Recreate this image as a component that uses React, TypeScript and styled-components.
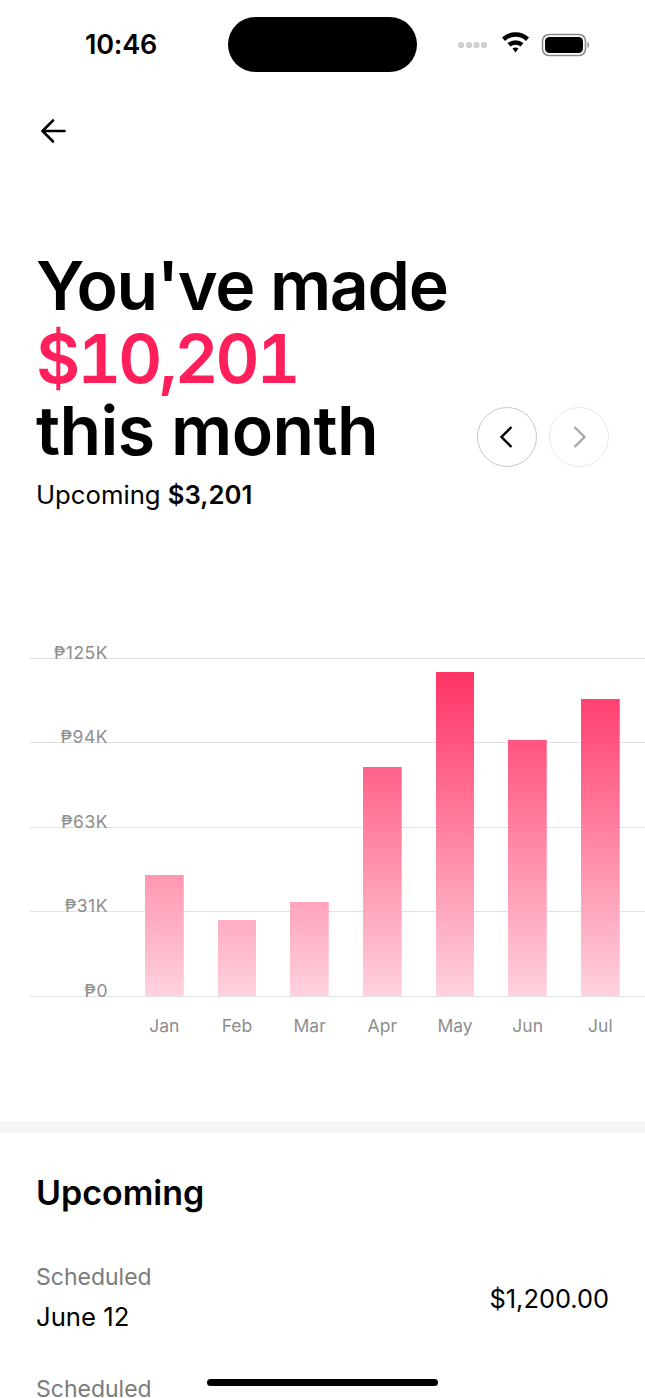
import React from "react";
import styled, { createGlobalStyle } from "styled-components";

const Global = createGlobalStyle`
  html, body { margin: 0; padding: 0; background: #fff; }
  body { font-family: Inter, "Liberation Sans", sans-serif; color: #000; }
  * { box-sizing: border-box; }
`;

const Page = styled.div`
  position: relative;
  width: 645px;
  height: 1398px;
  overflow: hidden;
  background: #fff;
`;

const StatusBar = styled.div`
  position: relative;
  height: 89px;
  padding: 0 56px 0 85px;
  display: flex;
  align-items: center;
  justify-content: space-between;
`;

const Time = styled.div`
  font-size: 27px;
  font-weight: 600;
  letter-spacing: -0.2px;
  line-height: 30px;
  color: #000;
`;

const Island = styled.div`
  position: absolute;
  left: 228px;
  top: 17px;
  width: 189px;
  height: 55px;
  border-radius: 28px;
  background: #000;
`;

const StatusIcons = styled.div`
  display: flex;
  align-items: center;
`;

const BackRow = styled.div`
  height: 82px;
  padding: 29px 0 0 40px;
  display: flex;
  align-items: flex-start;
`;

const Hero = styled.section`
  position: relative;
  padding: 78px 36px 0 36px;
`;

const Headline = styled.h1`
  margin: 0;
  font-size: 68px;
  line-height: 72.5px;
  font-weight: 600;
  letter-spacing: -1.3px;
`;

const Amount = styled.span`
  display: block;
  color: #ff1f5a;
  font-feature-settings: "tnum";
  letter-spacing: -3px;
`;

const HeadTail = styled.span`
  display: block;
  letter-spacing: -0.6px;
`;

const Sub = styled.p`
  margin: 11px 0 0;
  font-size: 25.7px;
  line-height: 34px;
  font-weight: 400;
  b { font-weight: 600; }
`;

const Pager = styled.div`
  position: absolute;
  right: 36px;
  top: 236px;
  display: flex;
  gap: 12px;
`;

const Circle = styled.button<{ $off?: boolean }>`
  width: 60px;
  height: 60px;
  border-radius: 50%;
  padding: 0;
  background: #fff;
  border: 1px solid ${(p) => (p.$off ? "#e9e9eb" : "#c6c7c9")};
  color: ${(p) => (p.$off ? "#aaaaaa" : "#000")};
  display: flex;
  align-items: center;
  justify-content: center;
`;

const Chart = styled.section`
  position: relative;
  margin: 146px 0 0 30px;
  height: 463px;
`;

const GridRow = styled.div`
  height: 84.5px;
  border-top: 1px solid #e0e2ea;
  position: relative;
`;

const AxisLabel = styled.span`
  position: absolute;
  right: calc(100% - 78px);
  bottom: 100%;
  margin-bottom: -4px;
  white-space: nowrap;
  font-size: 17.5px;
  line-height: 20px;
  letter-spacing: 0.5px;
  color: #8e8e8e;
`;

const Bars = styled.div`
  position: absolute;
  left: 115px;
  top: 14px;
  height: 324px;
  display: flex;
  align-items: flex-end;
  gap: 34.2px;
`;

const Bar = styled.div`
  width: 38.5px;
  background-image: linear-gradient(to bottom, #ff3366, #ffd2df);
  background-size: 100% 324px;
  background-position: bottom;
  background-repeat: no-repeat;
`;

const Months = styled.div`
  position: absolute;
  left: 115px;
  top: 358px;
  display: flex;
  gap: 34.2px;
`;

const Month = styled.span`
  width: 38.5px;
  display: flex;
  justify-content: center;
  font-size: 17.5px;
  line-height: 20px;
  color: #8e8e8e;
`;

const Divider = styled.div`
  height: 12px;
  background: #f5f5f5;
`;

const Upcoming = styled.section`
  padding: 38px 36px 0 36px;
`;

const SectionTitle = styled.h2`
  margin: 0 0 43px;
  font-size: 34px;
  line-height: 44px;
  font-weight: 600;
`;

const Row = styled.div`
  display: flex;
  align-items: center;
  justify-content: space-between;
  margin-bottom: 34px;
`;

const Label = styled.div`
  font-size: 23px;
  line-height: 39px;
  color: #7c7c7c;
`;

const Value = styled.div`
  font-size: 25.7px;
  line-height: 39px;
  color: #000;
`;

const Price = styled(Value)`
  font-size: 25.4px;
  margin-top: 3px;
`;

const HomeIndicator = styled.div`
  position: absolute;
  left: 207px;
  top: 1379px;
  width: 231px;
  height: 7px;
  border-radius: 4px;
  background: #000;
`;

const bars = [
  ["Jan", 121],
  ["Feb", 76],
  ["Mar", 94],
  ["Apr", 229],
  ["May", 324],
  ["Jun", 256],
  ["Jul", 297],
] as const;

const ticks = ["₱125K", "₱94K", "₱63K", "₱31K", "₱0"];

export default function App() {
  return (
    <Page>
      <Global />
      <StatusBar>
        <Time>10:46</Time>
        <Island />
        <StatusIcons>
          <svg width="132" height="26" viewBox="0 0 132 26" fill="none">
            <g fill="#cfcfcf">
              <rect x="1" y="10" width="6" height="6" rx="2" />
              <rect x="9" y="10" width="6" height="6" rx="2" />
              <rect x="16.5" y="10" width="6" height="6" rx="2" />
              <rect x="24" y="10" width="6" height="6" rx="2" />
            </g>
            <path d="M45 5.5a20 20 0 0 1 27 0l-3 3.4a15.5 15.5 0 0 0-21 0Z" fill="#000" />
            <path d="M50.5 11.2a12.4 12.4 0 0 1 16 0l-3 3.4a7.8 7.8 0 0 0-10 0Z" fill="#000" />
            <path d="M55.5 16.6a5 5 0 0 1 6 0l-3 3.9Z" fill="#000" />
            <rect x="85.5" y="2.5" width="43" height="21" rx="6.5" stroke="#8a8a8a" strokeWidth="1.6" />
            <rect x="88" y="5" width="38" height="16" rx="4.5" fill="#000" />
            <path d="M130.5 10v6c1.2-.5 1.8-1.6 1.8-3s-.6-2.5-1.8-3Z" fill="#8a8a8a" />
          </svg>
        </StatusIcons>
      </StatusBar>
      <BackRow>
        <svg width="26" height="26" viewBox="0 0 26 26" fill="none" stroke="#000" strokeWidth="2.6" strokeLinecap="round" strokeLinejoin="round">
          <path d="M24.5 13H3" />
          <path d="M13 2.5 2.5 13 13 23.5" />
        </svg>
      </BackRow>
      <Hero>
        <Headline>
          You've made
          <Amount>$10,201</Amount>
          <HeadTail>this month</HeadTail>
        </Headline>
        <Sub>
          Upcoming <b>$3,201</b>
        </Sub>
        <Pager>
          <Circle aria-label="Previous">
            <svg width="20" height="24" viewBox="0 0 20 24" fill="none" stroke="currentColor" strokeWidth="2.4">
              <path d="M14.5 2 4.5 12l10 10" />
            </svg>
          </Circle>
          <Circle $off aria-label="Next">
            <svg width="20" height="24" viewBox="0 0 20 24" fill="none" stroke="currentColor" strokeWidth="2.4">
              <path d="M5.5 2l10 10-10 10" />
            </svg>
          </Circle>
        </Pager>
      </Hero>
      <Chart>
        {ticks.map((t) => (
          <GridRow key={t}>
            <AxisLabel>{t}</AxisLabel>
          </GridRow>
        ))}
        <Bars>
          {bars.map(([m, h]) => (
            <Bar key={m} style={{ height: h }} />
          ))}
        </Bars>
        <Months>
          {bars.map(([m]) => (
            <Month key={m}>{m}</Month>
          ))}
        </Months>
      </Chart>
      <Divider />
      <Upcoming>
        <SectionTitle>Upcoming</SectionTitle>
        <Row>
          <div>
            <Label>Scheduled</Label>
            <Value>June 12</Value>
          </div>
          <Price>$1,200.00</Price>
        </Row>
        <Row>
          <Label>Scheduled</Label>
        </Row>
      </Upcoming>
      <HomeIndicator />
    </Page>
  );
}
